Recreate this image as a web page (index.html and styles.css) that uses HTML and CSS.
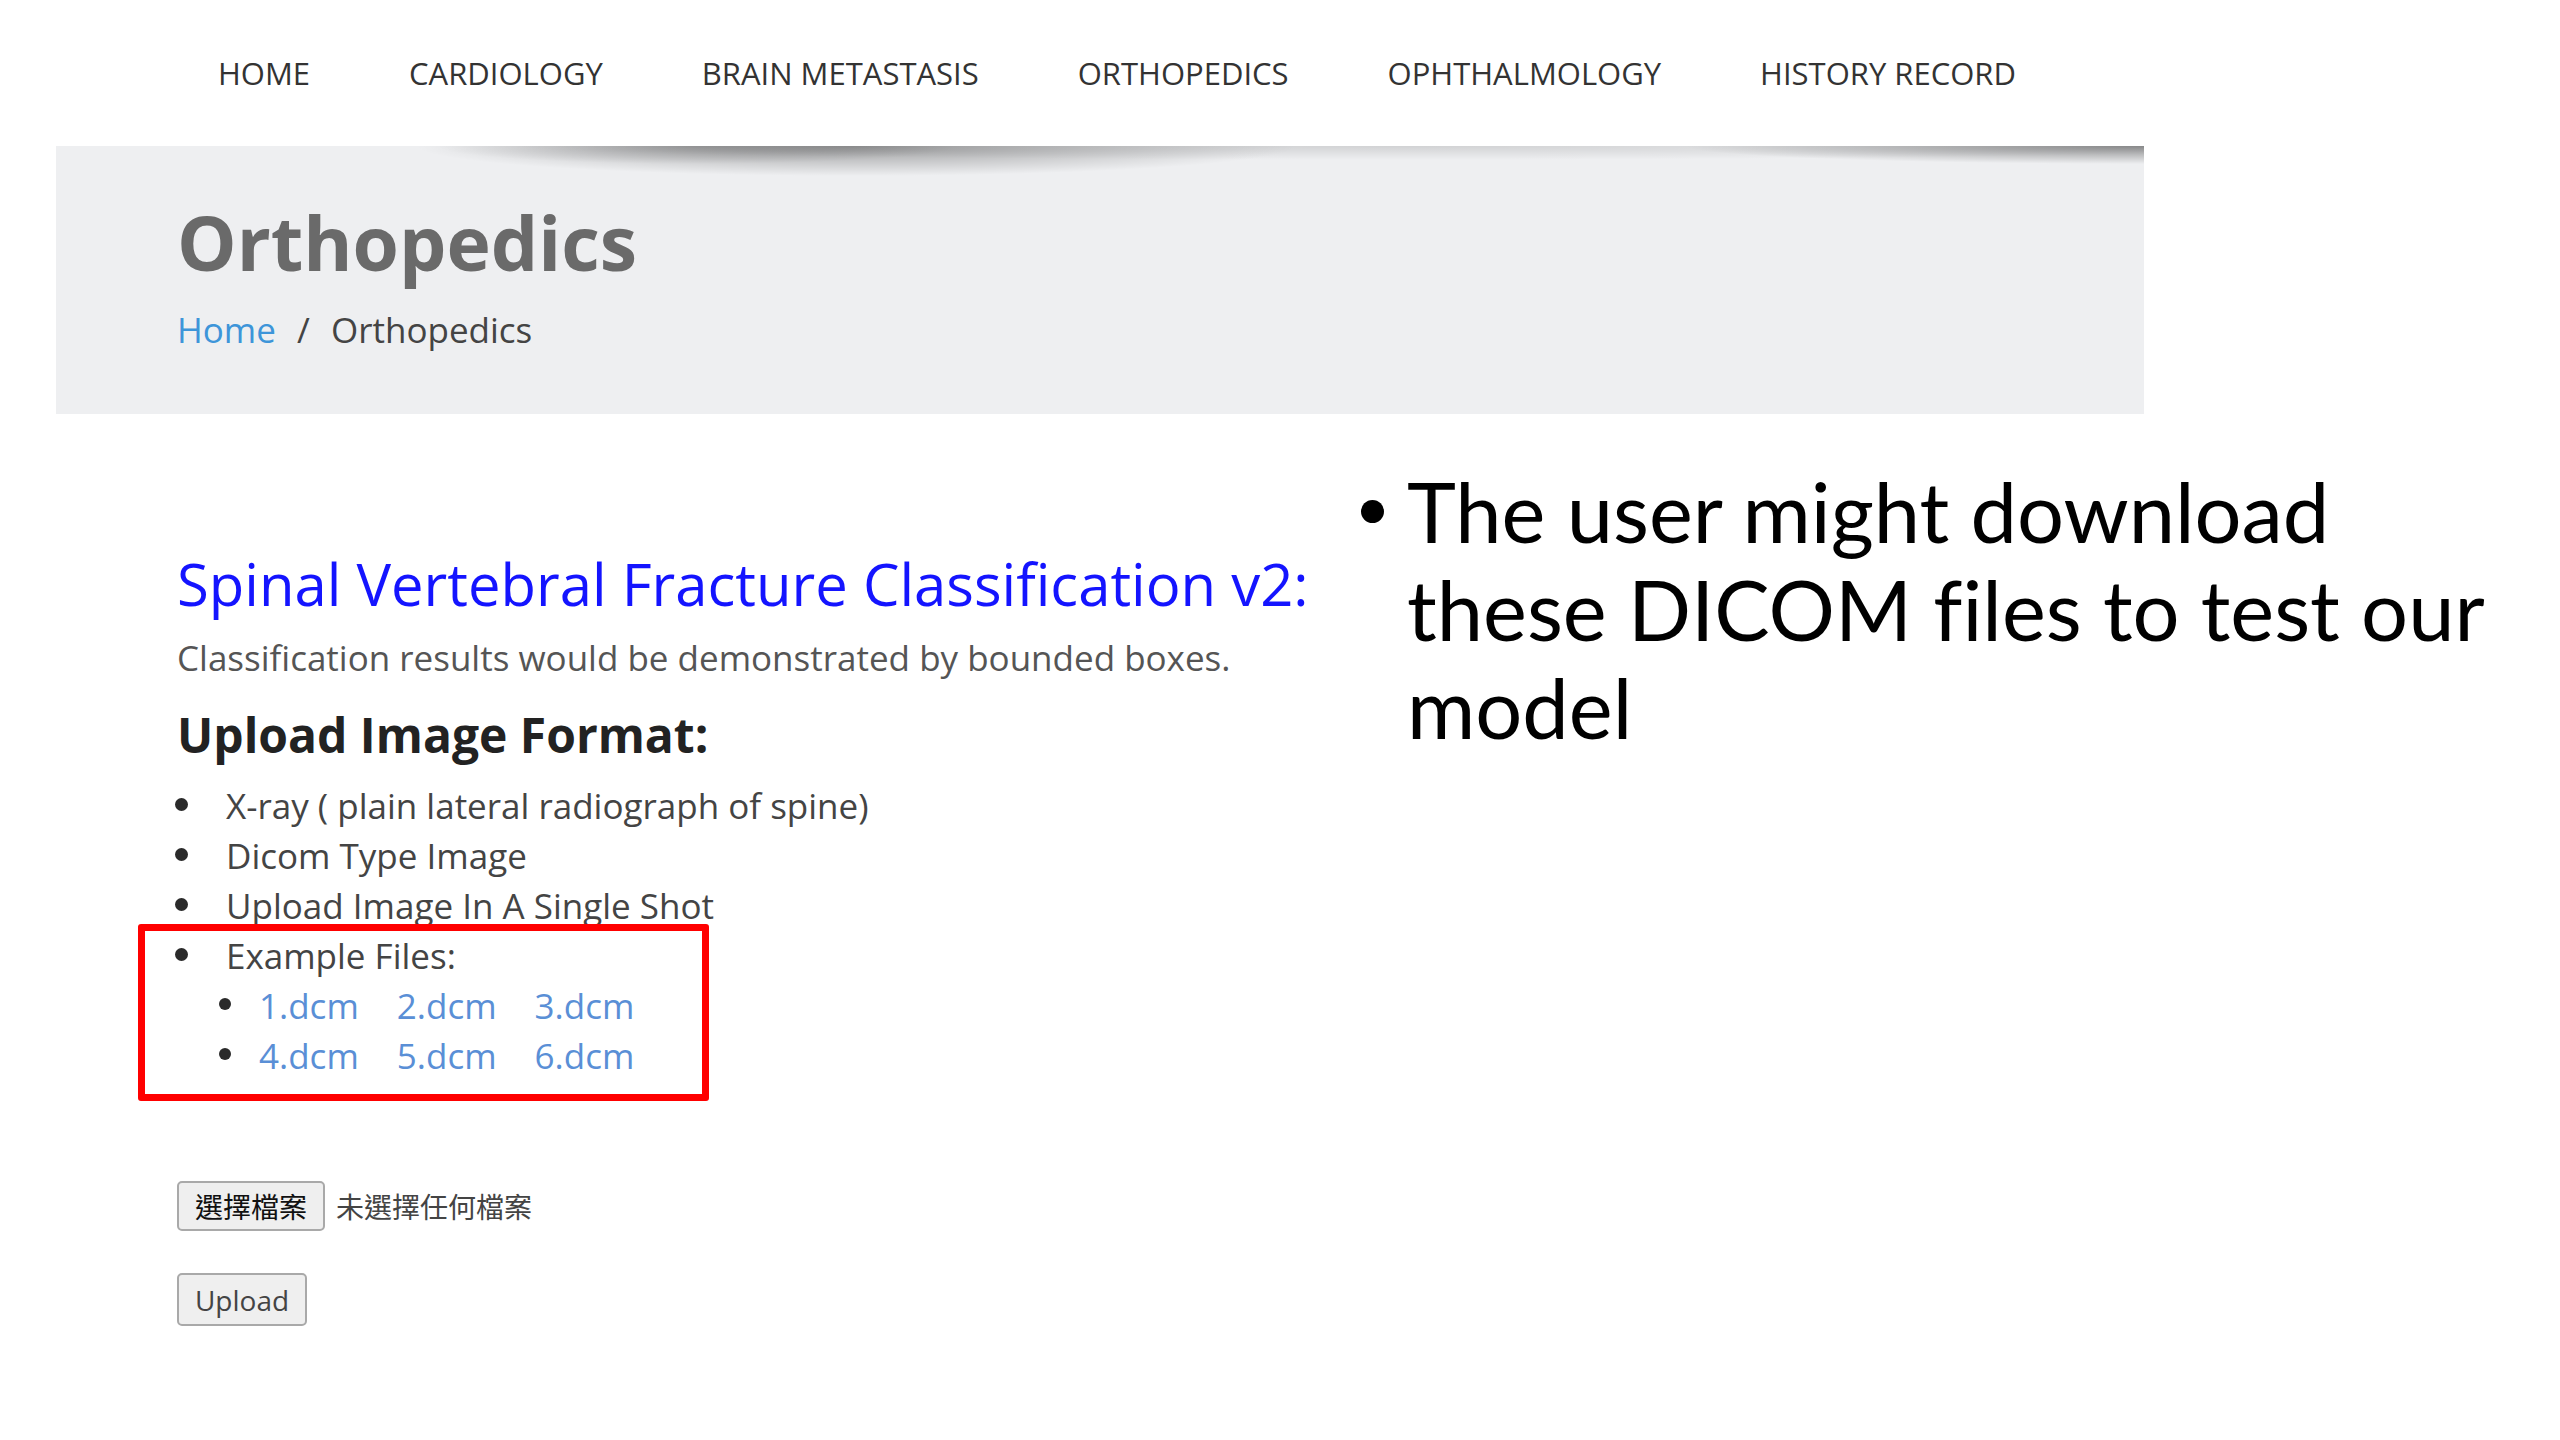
FILE: index.html
```html
<!DOCTYPE html>
<html lang="zh-Hant">
<head>
  <meta charset="UTF-8">
  <title>Orthopedics</title>
  <link rel="stylesheet" href="styles.css">
</head>
<body>

  <nav class="nav">
    <a href="#">Home</a>
    <a href="#">Cardiology</a>
    <a href="#">Brain Metastasis</a>
    <a href="#">Orthopedics</a>
    <a href="#">Ophthalmology</a>
    <a href="#">History Record</a>
  </nav>

  <header class="banner">
    <h1>Orthopedics</h1>
    <div class="crumbs">
      <a href="#">Home</a>
      <span class="sep">/</span>
      <span>Orthopedics</span>
    </div>
  </header>

  <div class="content">
    <main class="main">
      <h2 class="model-title">Spinal Vertebral Fracture Classification v2:</h2>
      <p class="desc">Classification results would be demonstrated by bounded boxes.</p>

      <h3 class="format-title">Upload Image Format:</h3>
      <ul class="formats">
        <li>X-ray ( plain lateral radiograph of spine)</li>
        <li>Dicom Type Image</li>
        <li>Upload Image In A Single Shot</li>
        <li class="examples">Example Files:
          <ul class="files">
            <li><a href="#">1.dcm</a><a href="#">2.dcm</a><a href="#">3.dcm</a></li>
            <li><a href="#">4.dcm</a><a href="#">5.dcm</a><a href="#">6.dcm</a></li>
          </ul>
          <div class="highlight"></div>
        </li>
      </ul>

      <form class="upload">
        <div class="file-row">
          <label class="file-btn">選擇檔案</label>
          <span class="file-name">未選擇任何檔案</span>
        </div>
        <button type="button" class="upload-btn">Upload</button>
      </form>
    </main>

    <aside class="note">
      <ul>
        <li>The user might download these DICOM files to test our model</li>
      </ul>
    </aside>
  </div>

</body>
</html>
```

FILE: styles.css
```css
body {
  margin: 0;
  background: #fff;
  font-family: 'Open Sans', 'Noto Sans CJK TC', sans-serif;
  color: #444;
}

a {
  text-decoration: none;
}

/* top menu */
.nav {
  display: flex;
  align-items: center;
  gap: 99px;
  height: 146px;
  padding-left: 218px;
}

.nav a {
  font-size: 31px;
  text-transform: uppercase;
  color: #333;
}

/* page title banner */
.banner {
  position: relative;
  margin-left: 56px;
  width: 2088px;
  height: 268px;
  box-sizing: border-box;
  padding: 48px 0 0 121px;
  background: #eeeff1;
  overflow: hidden;
}

/* curled paper shadow along the top edge */
.banner::before {
  content: "";
  position: absolute;
  top: 0;
  left: 0;
  right: 0;
  height: 60px;
  background:
    radial-gradient(440px 30px at 800px 0, rgba(0, 0, 0, 0.34), rgba(0, 0, 0, 0) 100%),
    radial-gradient(260px 18px at 640px 0, rgba(0, 0, 0, 0.2), rgba(0, 0, 0, 0) 100%),
    radial-gradient(460px 18px at 2088px 0, rgba(0, 0, 0, 0.42), rgba(0, 0, 0, 0) 100%),
    radial-gradient(900px 14px at 1350px 0, rgba(0, 0, 0, 0.12), rgba(0, 0, 0, 0) 100%);
}

.banner h1 {
  margin: 0;
  font-size: 75px;
  font-weight: 700;
  line-height: 96px;
  color: #6a6a6a;
}

.crumbs {
  margin-top: 15px;
  font-size: 35px;
  line-height: 50px;
  color: #444;
}

.crumbs a {
  color: #3d95d9;
}

.crumbs .sep {
  margin: 0 12px;
}

/* main area */
.content {
  display: flex;
  align-items: flex-start;
  padding-left: 177px;
}

.main {
  width: 1201px;
  flex-shrink: 0;
}

.model-title {
  margin: 139px 0 0;
  font-size: 58px;
  font-weight: 400;
  line-height: 62px;
  color: #1414ff;
  white-space: nowrap;
}

.desc {
  margin: 18px 0 0;
  font-size: 35px;
  line-height: 50px;
  color: #555;
}

.format-title {
  margin: 27px 0 0;
  font-size: 48px;
  font-weight: 700;
  line-height: 50px;
  color: #222;
}

.formats {
  margin: 21px 0 0;
  padding-left: 49px;
  list-style: none;
  font-size: 35px;
  line-height: 50px;
  color: #444;
}

.formats li {
  position: relative;
}

.formats li::before {
  content: "";
  position: absolute;
  left: -51px;
  top: 17px;
  width: 13px;
  height: 13px;
  border-radius: 50%;
  background: #2a2a2a;
}

.files {
  margin: 0;
  padding-left: 33px;
  list-style: none;
}

.formats .files li::before {
  left: -40px;
  width: 12px;
  height: 12px;
}

.files a {
  margin-right: 38px;
  color: #5a8fd6;
}

.highlight {
  position: absolute;
  left: -88px;
  top: -7px;
  width: 571px;
  height: 177px;
  box-sizing: border-box;
  border: 7px solid #ff0000;
  border-radius: 3px;
}

/* upload form */
.upload {
  margin-top: 100px;
}

.file-row {
  display: flex;
  align-items: center;
  gap: 11px;
}

.file-btn,
.upload-btn {
  display: inline-flex;
  align-items: center;
  justify-content: center;
  box-sizing: border-box;
  background: #efefef;
  border: 2px solid #a9a9a9;
  border-radius: 5px;
}

.file-btn {
  width: 148px;
  height: 50px;
  font-size: 28px;
  color: #111;
}

.file-name {
  font-size: 28px;
  color: #444;
}

.upload-btn {
  margin-top: 42px;
  width: 130px;
  height: 53px;
  padding: 0;
  font-family: 'Open Sans', sans-serif;
  font-size: 28px;
  color: #444;
}

/* slide note on the right */
.note {
  margin-top: 48px;
}

.note ul {
  margin: 0;
  padding-left: 29px;
  width: 1140px;
  list-style: none;
  font-family: Lato, 'Liberation Sans', sans-serif;
  font-size: 83px;
  line-height: 98px;
  font-variant-ligatures: none;
  color: #000;
}

.note li {
  position: relative;
}

.note li::before {
  content: "";
  position: absolute;
  left: -46px;
  top: 38px;
  width: 23px;
  height: 23px;
  border-radius: 50%;
  background: #000;
}
```
